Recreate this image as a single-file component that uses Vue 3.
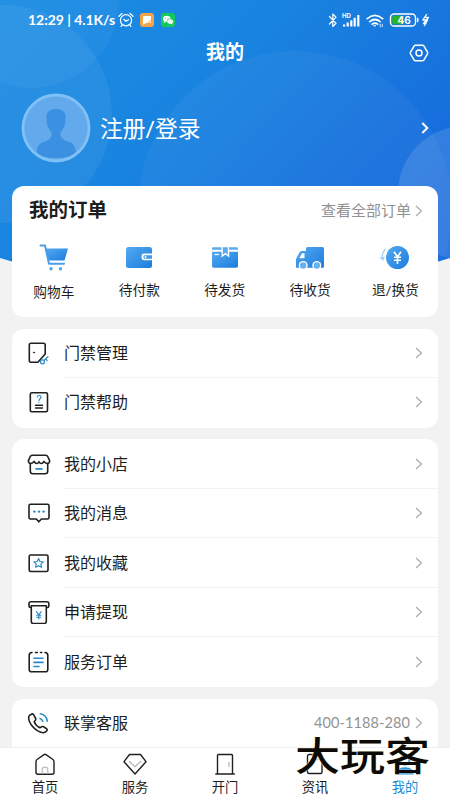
<script setup>
const orders = [
  { key: 'cart', label: '购物车' },
  { key: 'wallet', label: '待付款' },
  { key: 'box', label: '待发货' },
  { key: 'truck', label: '待收货' },
  { key: 'refund', label: '退/换货' },
]
const groups = [
  [
    { key: 'door', label: '门禁管理' },
    { key: 'help', label: '门禁帮助' },
  ],
  [
    { key: 'shop', label: '我的小店' },
    { key: 'message', label: '我的消息' },
    { key: 'favorite', label: '我的收藏' },
    { key: 'cash', label: '申请提现' },
    { key: 'service', label: '服务订单' },
  ],
  [{ key: 'phone', label: '联掌客服', value: '400-1188-280' }],
]
const tabs = [
  { key: 'home', label: '首页' },
  { key: 'gem', label: '服务' },
  { key: 'open', label: '开门' },
  { key: 'news', label: '资讯' },
  { key: 'me', label: '我的', active: true },
]
</script>

<template>
  <div class="page">
    <svg class="backdrop" viewBox="0 0 450 300" width="450" height="300">
      <defs>
        <linearGradient id="sky" x1="0" y1="0.1" x2="1" y2="0.75">
          <stop offset="0" stop-color="#1b8ce3" />
          <stop offset="0.4" stop-color="#1984e0" />
          <stop offset="0.75" stop-color="#1772dd" />
          <stop offset="1" stop-color="#1569dc" />
        </linearGradient>
        <clipPath id="dome"><path d="M0 0H450V258Q225 330 0 258Z" /></clipPath>
      </defs>
      <g clip-path="url(#dome)">
        <rect width="450" height="300" fill="url(#sky)" />
        <circle cx="31" cy="0" r="88" fill="#fff" opacity="0.04" />
        <circle cx="3" cy="114" r="109" fill="#fff" opacity="0.06" />
        <circle cx="295" cy="208" r="157" fill="#fff" opacity="0.04" />
        <circle cx="465" cy="193" r="67" fill="#fff" opacity="0.12" />
      </g>
    </svg>

    <header class="status">
      <span class="clock">12:29 | 4.1K/s</span>
      <svg class="alarm" viewBox="0 0 16 16" width="16" height="16" fill="none" stroke="#fff" stroke-width="1.25" stroke-linecap="round" stroke-linejoin="round">
        <circle cx="8" cy="8.3" r="5.6" /><path d="M1 4.3 4 1.4M15 4.3 12 1.4M5.8 7.3 8 9.300l2.500-1.600M3.800 13.500l-.7.8M12.200 13.500l.7.8" />
      </svg>
      <svg class="app" viewBox="0 0 14 14" width="14" height="14">
        <rect width="14" height="14" rx="3" fill="#f3a448" /><path d="M3 4.2Q3 3 4.2 3H11v6Q11 10 10 10H6L3 12Z" fill="#fff" /><path d="M11 6 7 10h3q1 0 1-1Z" fill="#fbd39c" />
      </svg>
      <svg class="app" viewBox="0 0 14 14" width="14" height="14">
        <rect width="14" height="14" rx="3" fill="#13c75b" /><ellipse cx="5.7" cy="5.8" rx="3.8" ry="3.1" fill="#fff" /><path d="m3 8-.4 2 2-1Z" fill="#fff" /><ellipse cx="9.2" cy="8.5" rx="3.2" ry="2.6" fill="#fff" stroke="#13c75b" stroke-width=".6" /><path d="m11 10 .7 1.5-2-.7Z" fill="#fff" />
        <g fill="#13c75b"><circle cx="4.4" cy="5" r=".5" /><circle cx="7" cy="5" r=".5" /><circle cx="8.2" cy="8" r=".4" /><circle cx="10.2" cy="8" r=".4" /></g>
      </svg>
      <svg class="signals" viewBox="0 0 104 18" width="104" height="18" fill="none" stroke="#fff" stroke-linecap="round" stroke-linejoin="round">
        <path d="M1.500 5.500 8 12.300 4.800 15.500V3L8 6.200 1.500 13" stroke-width="1.200" />
        <text x="14" y="6.800" class="hd">HD</text>
        <g stroke="none" fill="#fff"><rect x="15" y="13.500" width="2.200" height="2" /><rect x="18.600" y="11.500" width="2.200" height="4" /><rect x="22.200" y="9.300" width="2.200" height="6.200" /><rect x="25.600" y="6.800" width="2.200" height="8.700" /><rect x="29.200" y="4" width="2.200" height="11.500" /></g>
        <path d="M39.200 7.700q7.700-6.600 15.400 0M41.700 10.600q5.200-4.200 10.400 0M44.200 13.200q2.700-2.200 5.400 0" stroke-width="1.700" />
        <path d="M45.800 14.300h2.200l-1.100 1.100Z" fill="#fff" stroke-width=".5" />
        <path d="M52.200 13.200v2.600M54.200 15.800v-2.600" stroke-width=".8" />
        <rect x="62.500" y="3" width="25" height="12" rx="3.600" stroke-width="1.400" />
        <path d="M66 4.800h8.600v8.400H66q-1.700 0-1.700-1.700V6.500q0-1.700 1.700-1.700" fill="#2bb32b" stroke="none" />
        <path d="M89.700 7.500v3" stroke-width="1.500" />
        <text x="69.500" y="12.700" class="charge">46</text>
        <path d="m98.500 3.500-3.700 5.500h4.700l-3 5.500M98 6.500h2.500L95.500 12.500H98" stroke-width="1.300" />
      </svg>
    </header>

    <div class="titlebar">
      <h1>我的</h1>
      <svg class="settings" viewBox="0 0 20 18" width="20" height="18" fill="none" stroke="#fff" stroke-width="1.500" stroke-linejoin="round">
        <path d="M6.300 1.200h7.400Q14.400 1.200 14.800 1.900L18.500 8.200Q18.900 9 18.500 9.800L14.800 16.100Q14.400 16.800 13.700 16.800H6.300Q5.600 16.800 5.200 16.100L1.500 9.800Q1.100 9 1.500 8.200L5.200 1.900Q5.600 1.200 6.300 1.200Z" /><circle cx="10" cy="9" r="3" />
      </svg>
    </div>

    <section class="profile">
      <svg viewBox="0 0 70 70" width="70" height="70">
        <defs><clipPath id="face"><circle cx="35" cy="35" r="31.500" /></clipPath></defs>
        <circle cx="35" cy="35" r="33" fill="#62aaeb" stroke="#80c1f6" stroke-width="2.800" />
        <g clip-path="url(#face)"><path d="M25.500 23Q26 16 35 16T44.500 23L44 31Q42 37 39.500 39V43Q41 47 50 49.500Q54 52 55 59Q51 65 35 65T15.500 59Q16 52 21 49.500Q29 47 30.500 43V39Q28 37 26 31Z" fill="#3c90e1" /></g>
      </svg>
      <span class="login">注册/登录</span>
      <svg viewBox="0 0 8 12" width="8" height="12" fill="none" stroke="#fff" stroke-width="1.900"><path d="m1.300 1 5 5-5 5" /></svg>
    </section>

    <section class="card orders">
      <div class="orders-head">
        <h2>我的订单</h2>
        <span class="all">查看全部订单</span>
        <svg viewBox="0 0 8 12" width="8" height="12" fill="none" stroke="#aaa" stroke-width="1.200"><path d="m1 1 5.500 5L1 11" /></svg>
      </div>
      <div class="order-list">
        <div v-for="o in orders" :key="o.key" class="order" :class="o.key">
          <svg viewBox="0 0 32 30" width="32" height="30">
            <defs><linearGradient :id="'g-' + o.key" x1="0" y1="0" x2="1" y2="1"><stop offset="0" stop-color="#55aaf0" /><stop offset="1" stop-color="#1a7cdd" /></linearGradient></defs>
            <g v-if="o.key === 'cart'">
              <path d="M7.500 6.500H30L26.500 18.500H10.500Z" fill="url(#g-cart)" />
              <path d="M2.500 3.500H7L11 21.800H26" fill="none" stroke="#4a9eea" stroke-width="2" stroke-linecap="round" stroke-linejoin="round" />
              <circle cx="13" cy="26.800" r="1.700" fill="#52a5ed" /><circle cx="22.500" cy="26.800" r="1.700" fill="#52a5ed" />
            </g>
            <g v-else-if="o.key === 'wallet'">
              <rect x="3" y="5" width="26" height="21" rx="2.500" fill="url(#g-wallet)" /><path d="M30 11.600H21Q18.500 11.600 18.500 14.200v1.600q0 2.400 2.500 2.400H30Z" fill="#fff" /><path d="M29 13.300h-7q-1.500 0-1.500 1.200v1q0 1.300 1.500 1.300h7Z" fill="#4299e9" /><circle cx="22.500" cy="15" r="1" fill="#fff" />
            </g>
            <g v-else-if="o.key === 'box'">
              <path d="M3 6.500q0-1.300 1.300-1.300H12.500v2.600H3ZM20 5.200h7.700q1.300 0 1.300 1.300v1.300H20ZM13.800 5.200h5v7.500l-2.500-2-2.500 2Z" fill="#5babf0" />
              <path d="M3 9.800h9.500v5.800l4-3 3.800 3V9.800H29V24q0 1.800-1.800 1.800H4.800Q3 25.800 3 24Z" fill="url(#g-box)" /><path d="M5.500 12.500h4.500" stroke="#fff" stroke-width="1.200" />
            </g>
            <g v-else-if="o.key === 'truck'">
              <path d="M12 6.500q0-1.500 1.500-1.500h15q1.500 0 1.500 1.500V24.500q0 1.300-1.300 1.300H2V17L5.500 10.500Q6.200 9 7.500 9H12Z" fill="url(#g-truck)" /><path d="M10.500 11.200H8L5.300 16.200h5.200Z" fill="#fff" />
              <circle cx="9.200" cy="23.500" r="4.500" fill="#fff" /><circle cx="22.800" cy="23.500" r="4.500" fill="#fff" /><circle cx="9.200" cy="23.500" r="3.200" fill="#67b1ee" /><circle cx="22.800" cy="23.500" r="3.200" fill="#67b1ee" />
            </g>
            <g v-else>
              <circle cx="18.500" cy="15.500" r="11.500" fill="url(#g-refund)" /><path d="m15 9.800 3.500 5 3.500-5M18.500 14.500V22M15 15.200h7M15 18.300h7" fill="none" stroke="#fff" stroke-width="1.600" />
              <path d="M6 7.500Q2 12 3.800 17.500L1.500 15.800M3.800 17.500 5 15.300" fill="none" stroke="#a0cef4" stroke-width="1.300" stroke-linecap="round" />
            </g>
          </svg>
          <span>{{ o.label }}</span>
        </div>
      </div>
    </section>

    <section v-for="(group, i) in groups" :key="i" class="card menu">
      <div v-for="item in group" :key="item.key" class="row">
        <svg class="row-icon" viewBox="0 0 24 24" width="24" height="24" fill="none" stroke="#202020" stroke-width="1.600" stroke-linecap="round" stroke-linejoin="round">
          <g v-if="item.key === 'door'">
            <path d="M10.500 21.300H4q-1.700 0-1.700-1.700V4Q2.300 2.300 4 2.300H16.500q1.700 0 1.700 1.700v9L12 20q-1 1.300-1.500 1.300" /><circle cx="7" cy="11.500" r=".6" fill="#202020" stroke-width=".7" />
            <g stroke="#2889c8" stroke-width="1.200"><circle cx="15.500" cy="20.800" r="2" /><path d="m17 19.400 4-3.700M18.600 17.900l1.500 1.600" /></g>
          </g>
          <g v-else-if="item.key === 'help'">
            <rect x="3.300" y="2.800" width="17.200" height="19" rx="1.500" /><path d="M8.500 15.200h7M8.500 18h7" stroke-width="1.400" /><path d="M10.300 7q.2-1.500 1.900-1.500 1.800 0 1.800 1.600 0 1-1 1.600-1 .7-1 1.800M12 12.200v.1" stroke="#2889c8" stroke-width="1.200" />
          </g>
          <g v-else-if="item.key === 'shop'">
            <path d="M3.300 11.500V19q0 2.700 2.500 2.700H18.200q2.500 0 2.500-2.700V11.500" /><path d="M5 3.200H19Q20 3.200 20.700 4.500L22.700 8.800Q22.500 11.500 20.500 11.500 18 11.300 16.900 9.400 15.500 11.800 14 11.500 12.700 11.300 12 9.700 11.300 11.300 10 11.500 8.500 11.800 7.100 9.400 6 11.300 3.500 11.500 1.500 11.500 1.300 8.800L3.300 4.500Q4 3.200 5 3.200Z" /><path d="M9 16.900h6" stroke="#2889c8" />
          </g>
          <g v-else-if="item.key === 'message'">
            <path d="M3.500 3.300H20.500q1.500 0 1.500 1.500V16.500q0 1.500-1.500 1.500H14.500l-2.700 2.800L9.300 18H3.500Q2 18 2 16.500V4.800q0-1.500 1.500-1.500Z" /><g fill="#2889c8" stroke="none"><circle cx="7.400" cy="10.600" r="1.200" /><circle cx="12" cy="10.600" r="1.200" /><circle cx="16.600" cy="10.600" r="1.200" /></g>
          </g>
          <g v-else-if="item.key === 'favorite'">
            <rect x="2.200" y="4" width="18.800" height="16.500" rx="1.500" /><path d="m11.600 7.500 1.400 3 3.300.4-2.400 2.200.6 3.200-2.900-1.600-2.900 1.600.6-3.200-2.400-2.200 3.300-.4Z" stroke="#2889c8" stroke-width="1.200" />
          </g>
          <g v-else-if="item.key === 'cash'">
            <path d="M4 7.500H3.500Q2 7.500 2 6V3.500Q2 1.700 3.800 1.700H20q1.800 0 1.800 1.800V6q0 1.500-1.500 1.500H19.500M4.300 5.700H19.300V21.500q0 2-2 2H6.300q-2 0-2-2Z" /><path d="m9.400 11.700 2.400 3.200 2.400-3.200M11.800 14.900v4M9.700 15.200h4.200M9.700 17.200h4.200" stroke="#2889c8" stroke-width="1.100" />
          </g>
          <g v-else-if="item.key === 'service'">
            <path d="M5 2.500Q2.200 2.500 2.200 5.300V19.500q0 2.300 2.300 2.300H18.500q2.300 0 2.300-2.300V5.300Q20.800 2.500 18 2.500M8.500 2.500h1.800M13.500 2.500h1.200" /><path d="M7 8.300h9M7 12.400h9M7 16.500h5" stroke="#2889c8" />
          </g>
          <g v-else>
            <path d="M4.300 3.200Q5.500 2.500 6.600 3.700L8.700 7.500Q9 8.600 8.200 9.500L7.200 10.700Q8.300 14.200 12.800 16.800L15 15.600Q16 15.200 17 16L19.800 17.900Q20.600 19 19.600 20 17.500 22.500 13.800 21.300 8.500 19.500 4 13.500.7 8.700 2 5.200 2.800 3.900 4.300 3.200Z" /><path d="M13.300 2.700q6 1 7 7.300M13 7.500q2 .7 2.700 2.800" stroke="#2889c8" />
          </g>
        </svg>
        <div class="row-body">
          <span class="row-label">{{ item.label }}</span>
          <span v-if="item.value" class="row-value">{{ item.value }}</span>
          <svg viewBox="0 0 8 12" width="8" height="12" fill="none" stroke="#aaa" stroke-width="1.200"><path d="m1 1 5.500 5L1 11" /></svg>
        </div>
      </div>
    </section>

    <nav class="tabs">
      <div v-for="t in tabs" :key="t.key" class="tab" :class="{ active: t.active }">
        <svg viewBox="0 0 26 24" width="26" height="24" fill="none" stroke="#202020" stroke-width="1.400" stroke-linecap="round" stroke-linejoin="round">
          <g v-if="t.key === 'home'"><path d="M12 1.600Q13 1 14 1.600L21 6.500Q22 7.300 22 8.500V19.200q0 2-2 2H6q-2 0-2-2V8.500Q4 7.300 5 6.500Z" /><path d="M10.200 20.500V16.500q0-2.300 2.800-2.300t2.800 2.300V20.500" stroke="#bbb" stroke-width="1.200" /></g>
          <g v-else-if="t.key === 'gem'"><path d="M7.500 1.500H18.500L24 8.700 13 21 2 8.700Z" /><path d="m7.500 8.500 5.500 5.300L18.500 8.500" stroke="#bbb" /></g>
          <g v-else-if="t.key === 'open'"><path d="M5.500 21V2.500q0-1 1-1H19.500q1 0 1 1V21M3.800 21H22.300" /><path d="M17 9.500v4" stroke="#bbb" /></g>
          <g v-else-if="t.key === 'news'"><rect x="5.500" y="1.500" width="14.500" height="19" rx="1.500" /><path d="M9 6.500h7" stroke="#bbb" /></g>
          <g v-else stroke="#218bd5"><circle cx="13" cy="7" r="4.500" stroke-width="2.300" /><path d="M5 20.800Q5 15 13 15T21 20.800Z" fill="#218bd5" /></g>
        </svg>
        <span>{{ t.label }}</span>
      </div>
    </nav>
    <div class="watermark">大玩客</div>
  </div>
</template>

<style>
body {
  margin: 0;
  overflow: hidden;
}
</style>

<style scoped>
.page {
  position: relative;
  display: flex;
  flex-direction: column;
  box-sizing: border-box;
  width: 450px;
  height: 800px;
  overflow: hidden;
  background: #f2f2f2;
  color: #1d1d1d;
  font-family: Roboto, "Noto Sans CJK SC", sans-serif;
}
svg {
  display: block;
  flex: none;
}
.backdrop {
  position: absolute;
  top: 0;
  left: 0;
}
.status,
.titlebar,
.profile,
.card {
  position: relative;
  flex: none;
}
.status {
  display: flex;
  align-items: center;
  height: 39px;
  padding: 0 18px 0 28px;
  color: #fff;
}
.clock {
  width: 90px;
  font: 700 14px/20px Lato, sans-serif;
  letter-spacing: -0.050px;
  white-space: nowrap;
}
.app {
  margin-left: 6px;
}
.app + .app {
  margin-left: 7px;
}
.signals {
  margin-left: auto;
}
.hd {
  font: 700 6px Inter, sans-serif;
  fill: #fff;
  stroke: none;
}
.charge {
  font: 700 10px Inter, sans-serif;
  fill: #fff;
  stroke: none;
}
.titlebar {
  display: grid;
  grid-template-columns: 1fr auto 1fr;
  align-items: center;
  height: 27px;
  padding: 0 21px;
}
.titlebar h1 {
  grid-column: 2;
  margin: 0;
  font-size: 19px;
  line-height: 27px;
  font-weight: 700;
  color: #fff;
}
.settings {
  justify-self: end;
}
.profile {
  display: flex;
  align-items: center;
  height: 70px;
  padding: 27px 21px 0;
  color: #fff;
}
.login {
  flex: 1;
  padding: 3px 0 0 9px;
  font-size: 22.800px;
  line-height: 30px;
  font-weight: 400;
}
.card {
  margin: 0 12px;
  background: #fff;
  border-radius: 12px;
}
.orders {
  box-sizing: border-box;
  height: 131px;
  margin-top: 23px;
}
.orders-head {
  display: flex;
  align-items: center;
  height: 49px;
  padding: 0 15px 0 17px;
}
.orders-head h2 {
  flex: 1;
  margin: 0;
  font-size: 19.500px;
  line-height: 28px;
  font-weight: 700;
}
.all {
  margin-right: 4px;
  color: #919191;
  font-size: 15px;
  line-height: 20px;
}
.order-list {
  display: grid;
  grid-template-columns: repeat(5, 85.400px);
  padding-top: 7px;
  margin-left: -0.800px;
}
.order {
  display: flex;
  flex-direction: column;
  align-items: center;
  gap: 7.500px;
  font-size: 13.700px;
  line-height: 20px;
}
.order.cart {
  gap: 10px;
}
.menu {
  margin-top: 11.700px;
}
.menu:nth-of-type(5) {
  padding-bottom: 12px;
}
.row {
  display: flex;
  align-items: center;
  height: 49.500px;
  padding-left: 15px;
}
.row-icon {
  margin-top: -1px;
}
.row-body {
  flex: 1;
  display: flex;
  align-items: center;
  box-sizing: border-box;
  height: 100%;
  margin-left: 13px;
  padding-right: 15px;
  border-bottom: 1px solid #f3f3f3;
}
.row:last-child .row-body {
  border-bottom-color: transparent;
}
.row-label {
  flex: 1;
  padding-top: 2px;
  font-size: 16px;
  line-height: 24px;
}
.row-value {
  margin-right: 5px;
  color: #929292;
  font: 400 14.500px Lato, sans-serif;
  letter-spacing: 0.100px;
}
.tabs {
  position: absolute;
  left: 0;
  bottom: 0;
  display: grid;
  grid-template-columns: repeat(5, 1fr);
  box-sizing: border-box;
  width: 100%;
  height: 53px;
  padding-top: 5px;
  border-top: 1px solid #eee;
  background: #fff;
}
.tab {
  display: flex;
  flex-direction: column;
  align-items: center;
  gap: 1px;
  font-size: 13.300px;
  line-height: 20px;
}
.active {
  color: #218bd5;
}
.watermark {
  position: absolute;
  left: 295px;
  top: 731px;
  font: 500 45px/45px "Noto Sans CJK SC", sans-serif;
  color: #0b0a08;
  white-space: nowrap;
  transform: scaleY(0.850);
  text-shadow: 0 0 1px #fff5d8, 0 0 2px #fff5d8;
}
</style>
